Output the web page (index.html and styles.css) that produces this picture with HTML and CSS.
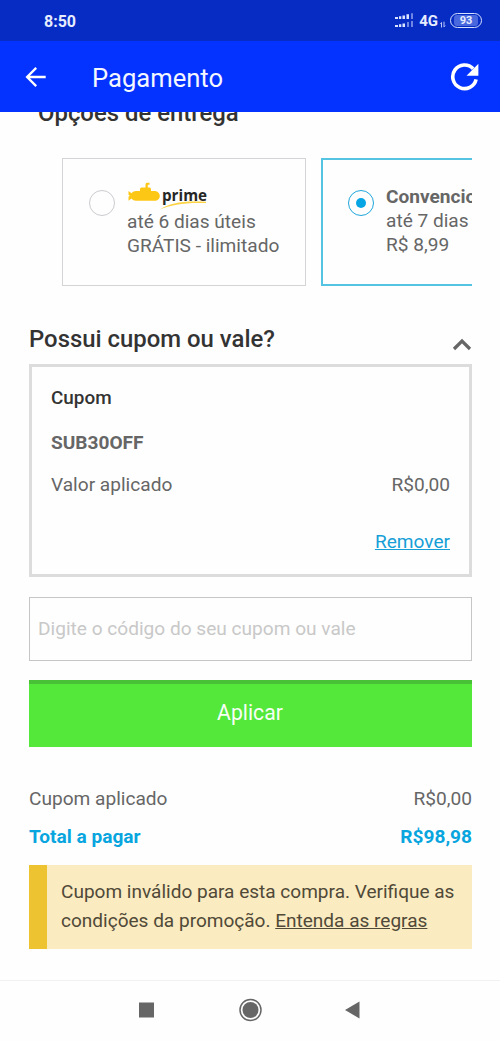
FILE: index.html
```html
<!DOCTYPE html>
<html lang="pt-BR">
<head>
<meta charset="utf-8">
<title>Pagamento</title>
<link rel="stylesheet" href="styles.css">
</head>
<body>
<div class="screen">
  <div class="status-bar">
    <span class="clock">8:50</span>
    <div class="status-icons">
      <svg class="signal" width="20" height="16" viewBox="0 0 20 16">
        <g fill="#dbe4ff">
          <path d="M1 4h3v2H1zM5 3.300h2.300V6H5zM8.500 2.500h2.500V6H8.500zM12.500 1.300h2.500V6h-2.500zM1 12h3v2H1zM5 11.300h2.300V14H5zM8.500 10.500h2.500V14H8.500z"/>
        </g>
        <path fill="#6f87e3" d="M17 .3h2V6h-2zM13 9h2v5h-2zM17 8h2v6h-2z"/>
      </svg>
      <span class="network">4G</span>
      <svg class="data" width="6" height="7" viewBox="0 0 6 7"><path d="M1.500 6.500v-5L.4 2.800M4 .7v5.200l1.200-1.300" fill="none" stroke="#b9c7f8" stroke-width="1"/></svg>
      <span class="battery"><span class="battery-level">93</span></span>
    </div>
  </div>
  <header class="app-bar">
    <svg class="back" width="22" height="22" viewBox="0 0 22 22"><path d="M21.700 11H3.400M12.200 1.900L3.100 11l9.100 9.100" fill="none" stroke="#fff" stroke-width="2.300"/></svg>
    <h1 class="app-title">Pagamento</h1>
    <svg class="reload" width="30" height="30" viewBox="0 0 30 30"><path d="M26.100 17.300A11.800 11.800 0 1 1 23.200 6.700" fill="none" stroke="#fff" stroke-width="3.600"/><path d="M28.400 1.800v12H16.500z" fill="#fff"/></svg>
  </header>
  <main class="content">
    <h2 class="delivery-title">Opções de entrega</h2>
    <div class="delivery-list">
      <div class="option">
        <span class="radio"></span>
        <div class="option-text">
          <div class="prime-logo">
            <svg class="submarine" width="82" height="30" viewBox="0 0 82 30">
              <path fill="#fdc716" d="M1.500 10l3 2.200C5.800 10.700 7.200 10 9 10h4V8q0-1.500 1.500-1.500h4V3.500q0-1.700 1.500-1.700h2.500v1.900h-1.700v2.800h1.700q1.500 0 1.500 1.500v2h3.500c3 0 5.300 2.200 5.300 4.900s-2.300 4.900-5.300 4.900H9c-1.800 0-3.200-.7-4.500-2.200l-3 2.200v-4l1.300-1-1.300-1z"/>
              <path fill="#fdd344" d="M33 28.500C43 21.500 57 19.500 79 20.800v1.300C58 21.300 44 23.800 33 28.500z"/>
            </svg>
            <span class="prime-name">prime</span>
          </div>
          <div>até 6 dias úteis</div>
          <div>GRÁTIS - ilimitado</div>
        </div>
      </div>
      <div class="option selected">
        <span class="radio"></span>
        <div class="option-text">
          <strong class="option-name">Convencional</strong>
          <div>até 7 dias úteis</div>
          <div>R$ 8,99</div>
        </div>
      </div>
    </div>
    <div class="coupon-heading">
      <h2 class="coupon-title">Possui cupom ou vale?</h2>
      <svg class="chevron" width="20" height="13" viewBox="0 0 20 13"><path d="M2 11l8-8 8 8" fill="none" stroke="#666" stroke-width="3.200"/></svg>
    </div>
    <section class="coupon-card">
      <h3 class="card-label">Cupom</h3>
      <strong class="code">SUB30OFF</strong>
      <div class="row"><span>Valor aplicado</span><span>R$0,00</span></div>
      <a class="remove">Remover</a>
    </section>
    <input class="coupon-input" type="text" placeholder="Digite o código do seu cupom ou vale">
    <button class="apply">Aplicar</button>
    <div class="row applied"><span>Cupom aplicado</span><span>R$0,00</span></div>
    <div class="row total"><span>Total a pagar</span><span>R$98,98</span></div>
    <p class="alert"><span class="alert-line">Cupom inválido para esta compra. Verifique as</span> <span class="alert-line">condições da promoção. <a class="rules">Entenda as regras</a></span></p>
  </main>
  <nav class="nav-bar">
    <svg width="222" height="24" viewBox="0 0 222 24" fill="#666">
      <path d="M0 4.500h15v15H0z"/>
      <circle cx="111.500" cy="12" r="10.500" fill="none" stroke="#666" stroke-width="1.500"/>
      <circle cx="111.500" cy="12" r="8"/>
      <path d="M206 12l14.500-8.500v17z"/>
    </svg>
  </nav>
</div>
</body>
</html>
```
FILE: styles.css
```css
* { box-sizing: border-box; }
body { margin: 0; background: #fefefe; }
.screen {
  display: flex;
  flex-direction: column;
  width: 500px;
  height: 1041px;
  overflow: hidden;
  font: 19.1px/24px Roboto, "Liberation Sans", sans-serif;
  color: #666;
}
h1, h2, h3, p { margin: 0; }
.status-bar {
  display: flex;
  flex: none;
  align-items: center;
  justify-content: space-between;
  height: 41px;
  padding: 0 18px 0 44px;
  background: #062cc4;
  color: #e6edff;
}
.clock { margin-top: 2px; font-size: 16px; font-weight: 700; }
.status-icons { display: flex; align-items: center; }
.network { margin-left: 5px; font-size: 15px; font-weight: 700; }
.data { margin: 7px 4px 0 2px; }
.battery {
  width: 32px;
  height: 15px;
  padding: 1px 3px;
  border: 1px solid #d5dfff;
  border-radius: 8px;
}
.battery-level {
  display: block;
  background: #4968dd;
  border-radius: 3px;
  font-size: 11px;
  font-weight: 700;
  line-height: 11px;
  text-align: center;
}
.app-bar {
  display: flex;
  flex: none;
  align-items: center;
  height: 71px;
  padding: 0 20px 0 24px;
  background: #0432ff;
  color: #f4f7ff;
}
.app-title { margin: 3px auto 0 46px; font-size: 25.6px; font-weight: 400; line-height: 32px; }
.content { flex: 1; min-height: 0; padding: 0 28px 0 29px; overflow: hidden; }
.delivery-title {
  height: 46px;
  margin-top: -13px;
  padding-left: 9px;
  color: #333;
  font-size: 23.9px;
  font-weight: 500;
  line-height: 29px;
}
.delivery-list { display: flex; gap: 15px; height: 128px; margin-top: 13px; margin-left: 33px; overflow: hidden; }
.option {
  display: flex;
  flex: none;
  width: 244px;
  height: 128px;
  padding: 25px 0 0 26px;
  border: 1px solid #d4d4d6;
}
.option.selected { padding: 24px 0 0 25px; border: 2px solid #55c3e2; }
.radio {
  display: flex;
  flex: none;
  align-items: center;
  justify-content: center;
  width: 26px;
  height: 26px;
  margin: 6px 12px 0 0;
  border: 1px solid #cbcbd0;
  border-radius: 50%;
}
.selected .radio { border-color: #1fa6dc; }
.selected .radio::after { content: ""; width: 10px; height: 10px; border-radius: 50%; background: #08a5e5; }
.option-text { padding-top: 1px; white-space: nowrap; }
.option-name { display: block; font-weight: 700; }
.prime-logo { position: relative; height: 25px; }
.submarine { position: absolute; top: -4px; left: 0; }
.prime-name {
  position: absolute;
  top: -2px;
  left: 35px;
  color: #262626;
  font: 700 15.2px/24px "Open Sans", sans-serif;
}
.coupon-heading { display: flex; align-items: center; justify-content: space-between; height: 30px; margin: 38px 0 10px; }
.coupon-title { color: #333; font-size: 23.9px; font-weight: 500; line-height: 30px; }
.chevron { margin-top: 11px; }
.coupon-card {
  display: flex;
  flex-direction: column;
  height: 213px;
  padding: 19px 19px 0;
  border: 3px solid #dcdcdc;
}
.card-label { color: #333; font-size: 18.9px; font-weight: 500; }
.code { margin-top: 21px; font-weight: 700; }
.row { display: flex; justify-content: space-between; height: 24px; }
.coupon-card .row { margin-top: 18px; }
.remove { align-self: flex-end; margin-top: 33px; color: #169fd7; text-decoration: underline; }
.coupon-input {
  display: block;
  width: 100%;
  height: 64px;
  margin-top: 20px;
  padding: 0 8px 2px;
  border: 1px solid #c6c6c6;
  background: transparent;
  font: inherit;
}
.coupon-input::placeholder { color: #c8c8c8; opacity: 1; }
.apply {
  display: block;
  width: 100%;
  height: 67px;
  margin-top: 19px;
  padding: 0 1px 6px 0;
  border: 0;
  border-top: 4px solid #48c136;
  background: #53e83a;
  color: #f7fff5;
  font: 21.2px/24px Roboto, sans-serif;
}
.applied { margin-top: 40px; }
.total { margin-top: 14px; color: #08a5df; font-weight: 700; }
.alert {
  height: 84px;
  margin-top: 16px;
  padding: 13px 0 0 14px;
  border-left: 18px solid #eec331;
  background: #faebc0;
  color: #504938;
  font-size: 19.05px;
  line-height: 28.5px;
}
.alert-line { display: block; white-space: nowrap; }
.rules { text-decoration: underline; }
.nav-bar {
  display: flex;
  flex: none;
  align-items: center;
  height: 61px;
  padding-left: 138.5px;
  border-top: 1px solid #f1f1f1;
}
.nav-bar svg { margin-top: -2px; }
```
